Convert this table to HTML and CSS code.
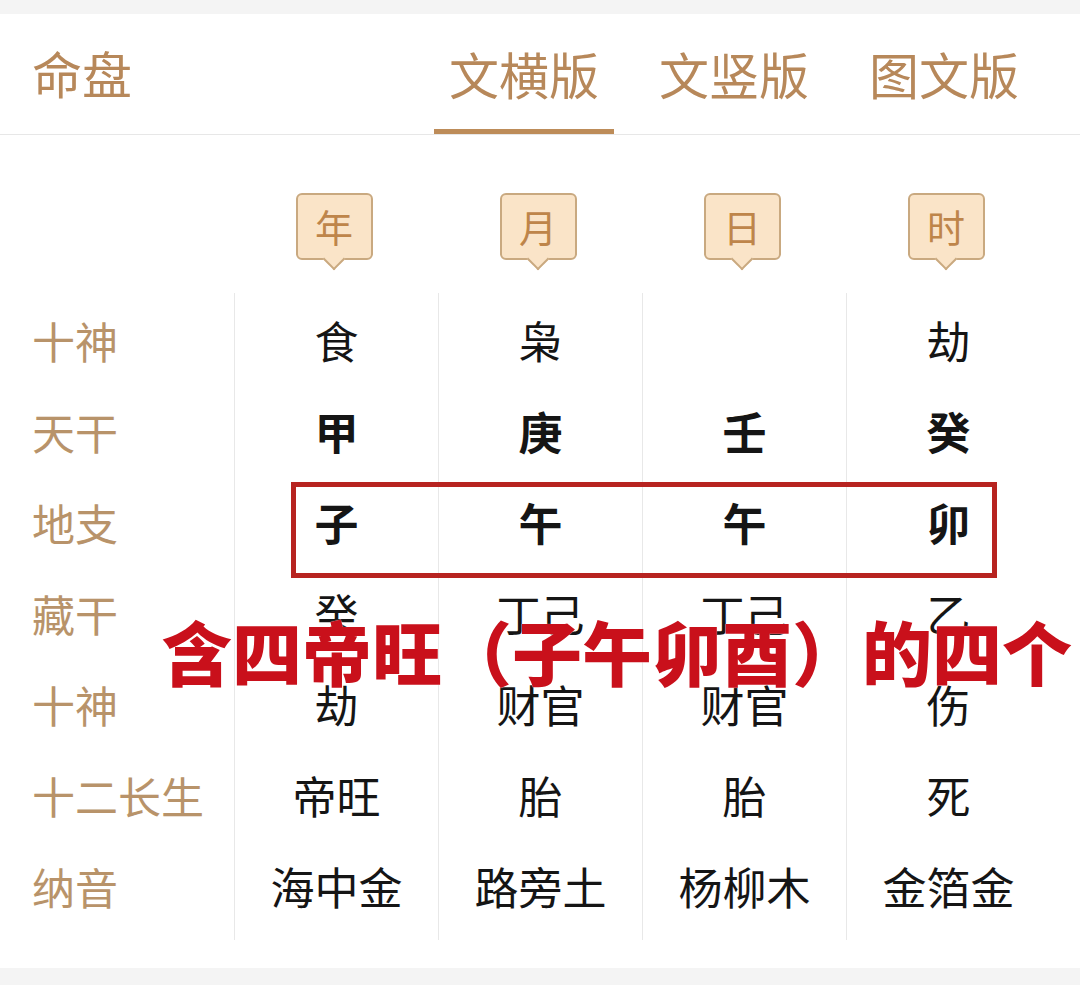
FILE: index.html
```html
<!DOCTYPE html>
<html lang="zh-CN">
<head>
<meta charset="utf-8">
<title>命盘</title>
<link rel="stylesheet" href="styles.css">
</head>
<body>
<div class="page">
  <div class="band"></div>
  <header class="tabs">
    <div class="title">命盘</div>
    <nav class="tab-group">
      <span class="tab active">文横版</span>
      <span class="tab">文竖版</span>
      <span class="tab">图文版</span>
    </nav>
  </header>
  <main class="board">
    <div class="badges">
      <div class="badge-spacer"></div>
      <div class="badge-cell"><span class="badge">年</span></div>
      <div class="badge-cell"><span class="badge">月</span></div>
      <div class="badge-cell"><span class="badge">日</span></div>
      <div class="badge-cell"><span class="badge">时</span></div>
    </div>
    <div class="table">
      <div class="col labels">
        <div class="cell">十神</div>
        <div class="cell">天干</div>
        <div class="cell">地支</div>
        <div class="cell">藏干</div>
        <div class="cell">十神</div>
        <div class="cell">十二长生</div>
        <div class="cell">纳音</div>
      </div>
      <div class="col values">
        <div class="cell">食</div>
        <div class="cell strong">甲</div>
        <div class="cell strong">子</div>
        <div class="cell">癸</div>
        <div class="cell">劫</div>
        <div class="cell">帝旺</div>
        <div class="cell">海中金</div>
      </div>
      <div class="col values">
        <div class="cell">枭</div>
        <div class="cell strong">庚</div>
        <div class="cell strong">午</div>
        <div class="cell">丁己</div>
        <div class="cell">财官</div>
        <div class="cell">胎</div>
        <div class="cell">路旁土</div>
      </div>
      <div class="col values">
        <div class="cell"></div>
        <div class="cell strong">壬</div>
        <div class="cell strong">午</div>
        <div class="cell">丁己</div>
        <div class="cell">财官</div>
        <div class="cell">胎</div>
        <div class="cell">杨柳木</div>
      </div>
      <div class="col values">
        <div class="cell">劫</div>
        <div class="cell strong">癸</div>
        <div class="cell strong">卯</div>
        <div class="cell">乙</div>
        <div class="cell">伤</div>
        <div class="cell">死</div>
        <div class="cell">金箔金</div>
      </div>
    </div>
    <div class="highlight-box"></div>
    <div class="note">含四帝旺（子午卯酉）的四个</div>
  </main>
  <div class="band bottom"></div>
</div>
</body>
</html>
```

FILE: styles.css
```css
html, body {
  margin: 0;
  padding: 0;
  background: #f4f4f4;
}
body {
  font-family: "Noto Sans CJK SC", "Noto Sans", sans-serif;
  width: 1080px;
  height: 985px;
  overflow: hidden;
}
.page {
  display: flex;
  flex-direction: column;
  width: 1080px;
}
.band {
  height: 14px;
  background: #f4f4f4;
}
.band.bottom {
  height: 17px;
}
.tabs {
  height: 120px;
  background: #fff;
  border-bottom: 1px solid #e7e7e7;
  display: flex;
  align-items: stretch;
  padding-left: 32px;
  padding-right: 46px;
}
.title {
  font-size: 50px;
  color: #b7885a;
  line-height: 120px;
  align-self: flex-start;
  height: 120px;
  margin-top: -2px;
}
.tab-group {
  margin-left: auto;
  display: flex;
  gap: 30px;
}
.tab {
  font-size: 50px;
  color: #b7885a;
  padding: 0 15px;
  line-height: 118px;
  height: 120px;
  box-sizing: border-box;
  border-bottom: 5px solid transparent;
}
.tab.active {
  border-bottom-color: #bd8c59;
}
.board {
  position: relative;
  background: #fff;
  height: 833px;
  padding-top: 58px;
  box-sizing: border-box;
}
.badges {
  display: grid;
  grid-template-columns: 234px repeat(4, 204px);
  height: 100px;
}
.badge-cell {
  display: flex;
  justify-content: center;
}
.badge {
  position: relative;
  width: 77px;
  height: 67px;
  box-sizing: border-box;
  border: 2px solid #c9a980;
  border-radius: 6px;
  background: #fae4c8;
  color: #be854a;
  font-size: 38px;
  line-height: 62px;
  text-align: center;
  margin-left: -4px;
}
.badge::after {
  content: "";
  position: absolute;
  left: 50%;
  bottom: -9px;
  width: 14px;
  height: 14px;
  margin-left: -8px;
  background: #fae4c8;
  border-right: 2px solid #c9a980;
  border-bottom: 2px solid #c9a980;
  transform: rotate(45deg);
}
.table {
  display: grid;
  grid-template-columns: 234px repeat(4, 204px);
}
.col {
  display: flex;
  flex-direction: column;
  padding: 2px 0 8px;
}
.col.values {
  border-left: 1px solid #e8e8e8;
  align-items: center;
}
.cell {
  height: 91px;
  line-height: 91px;
  font-size: 44px;
  color: #151515;
  white-space: nowrap;
}
.labels .cell {
  color: #b8936a;
  padding-left: 32px;
  font-size: 43px;
}
.cell.strong {
  font-weight: 700;
}
.highlight-box {
  position: absolute;
  left: 291px;
  top: 347px;
  width: 706px;
  height: 96px;
  box-sizing: border-box;
  border: 5px solid #b72320;
}
.note {
  position: absolute;
  left: 162px;
  top: 480px;
  font-size: 70px;
  line-height: 72px;
  font-weight: 900;
  color: #c9101b;
  white-space: nowrap;
  letter-spacing: 0;
  text-shadow: 0 0 1px #fff;
}
```
